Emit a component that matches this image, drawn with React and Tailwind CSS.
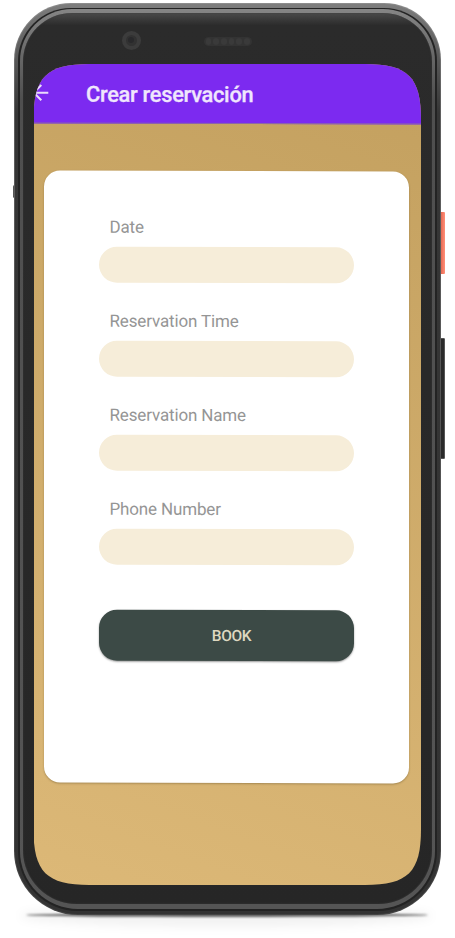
const fields = ["Date", "Reservation Time", "Reservation Name", "Phone Number"];

function Field({ label }) {
  return (
    <label className="flex h-[94px] flex-col">
      <span className="flex h-[40px] items-center pt-[1.5px] pl-[10.5px] text-[17px] leading-none tracking-[-0.15px] text-[#959595]">
        {label}
      </span>
      <input className="h-[36px] w-[255px] rounded-full bg-[#f6edd9] outline-none" />
    </label>
  );
}

function BackIcon() {
  return (
    <svg className="-ml-[3px] h-[18px] w-[18px] shrink-0" viewBox="0 0 18 18" fill="none" stroke="#e9dcfb" strokeWidth="2">
      <path d="M17.3 9.2H3.2M10.3 1.6 2.8 9.2l7.5 7.6" />
    </svg>
  );
}

function TopBezel() {
  return (
    <div className="flex h-[50px] items-start pt-[17.5px] pl-[88px]">
      <div className="flex h-[19px] w-[19px] items-center justify-center rounded-full border-[4px] border-[#3c3c3c] bg-[#323232]">
        <div className="h-[6px] w-[6px] rounded-full bg-[#29292b]" />
      </div>
      <div className="mt-[6px] ml-[63px] flex h-[9px] w-[48px] items-center gap-[2px] rounded-full bg-[#333] px-[2px]">
        {[0, 1, 2, 3, 4, 5].map((i) => (
          <div key={i} className="h-[7px] flex-1 rounded-sm bg-[#3a3a3a]" />
        ))}
      </div>
    </div>
  );
}

function Screen() {
  return (
    <div className="flex h-[821px] w-[387.5px] flex-col bg-linear-[20deg] from-[#dcb877] to-[#c3a05f] font-['Roboto',sans-serif] [clip-path:path('M0_56C0_13_13_0_56_0H331.5C374.5_0_387.5_13_387.5_56V765C387.5_808_374.5_821_331.5_821H56C13_821_0_808_0_765Z')]">
      <div className="-mt-[3px] flex h-[62.7px] shrink-0 skew-y-[0.17deg] items-center border-b border-[#8d68a5] bg-[#7c2af0] pt-[3px]">
        <BackIcon />
        <h1 className="pt-[4px] pl-[37px] text-[21.8px] leading-none font-medium tracking-[-0.28px] text-[#f0e6fd] [-webkit-text-stroke:0.3px_#f0e6fd]">
          Crear reservación
        </h1>
      </div>
      <main className="mt-[47px] ml-[10.5px] flex h-[612px] w-[364.5px] shrink-0 skew-y-[0.15deg] flex-col rounded-[16px] bg-white pt-[36px] pl-[55px] shadow-[0_1px_2px_rgba(90,70,30,0.4)]">
        {fields.map((f) => (
          <Field key={f} label={f} />
        ))}
        <button className="mt-[27px] flex h-[50.5px] w-[255px] items-center justify-center rounded-[18px] bg-[#3c4a46] pt-[2px] pl-[10px] text-[15.5px] leading-none font-medium tracking-[-0.35px] text-[#ded8c0] shadow-[0_1px_2px_rgba(0,0,0,0.4)]">
          BOOK
        </button>
      </main>
    </div>
  );
}

export default function App() {
  return (
    <div className="relative h-[938px] w-[455px] overflow-hidden bg-white pt-[3px] pl-[13.5px]">
      <div className="absolute top-[913px] left-[26px] h-[4px] w-[402px] rounded-[50%] bg-black/60 blur-[1px]" />
      <div className="absolute top-[905px] left-[20px] h-[22px] w-[412px] rounded-[50%] bg-black/5 blur-[5px]" />
      <div className="absolute top-[185px] left-[12.5px] h-[13px] w-[3px] rounded-sm bg-[#555]" />
      <div className="absolute top-[212px] left-[439px] h-[62px] w-[6px] rounded-[1px] bg-linear-to-r from-[#d9543f] to-[#ff8f78]" />
      <div className="absolute top-[338px] left-[439px] h-[121px] w-[6px] rounded-[1px] border border-[#555] bg-[#2a2a2a]" />

      <div className="relative h-[912px] w-[427.5px] rounded-t-[57px] rounded-b-[64px] bg-linear-to-b from-[#8c8c8c] via-[#606060] via-10% to-[#444] p-px">
        <div className="h-full w-full rounded-t-[56px] rounded-b-[63px] bg-linear-to-b from-[#7d7d7d] via-[#363636] via-12% to-[#333] px-[3.5px] pt-[4px] pb-[3px]">
          <div className="h-full w-full rounded-t-[53px] rounded-b-[60px] bg-[#232323] px-[1.5px] pt-[1px] pb-[2px]">
            <div className="h-full w-full rounded-t-[52px] rounded-b-[58px] bg-linear-to-b from-[#858585] via-[#4f4f4f] via-10% to-[#555] px-[3.5px] pt-[4px] pb-[5px]">
              <div className="flex h-full w-full flex-col rounded-t-[49px] rounded-b-[54px] bg-linear-to-b from-[#4a4a4a] via-[#2b2b2b] via-[1.4%] to-[#262626] px-[10.5px] shadow-[inset_0_0_2px_#3a3a3a]">
                <TopBezel />
                <div className="mt-px">
                  <Screen />
                </div>
              </div>
            </div>
          </div>
        </div>
      </div>
    </div>
  );
}
